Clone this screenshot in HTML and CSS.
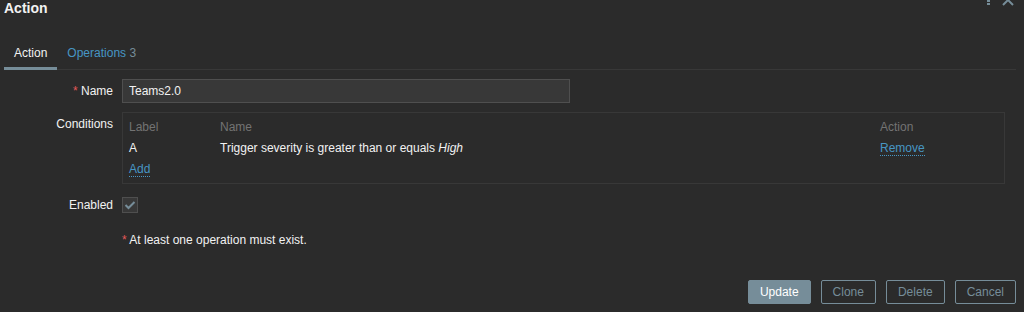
FILE: index.html
```html
<!DOCTYPE html>
<html lang="en">
<head>
  <meta charset="UTF-8">
  <title>Action</title>
  <link rel="stylesheet" href="styles.css">
</head>
<body>

<div class="dialog">
  <div class="dialog-head">
    <h4>Action</h4>
    <div class="head-tools">
      <span class="kebab"><i></i><i></i><i></i></span>
      <svg class="close" width="12" height="12" viewBox="0 0 12 12"><path d="M1 1 L11 11 M11 1 L1 11" stroke="#768d99" stroke-width="2"/></svg>
    </div>
  </div>

  <div class="tabs">
    <a class="tab active">Action</a>
    <a class="tab">Operations <span class="count">3</span></a>
  </div>

  <div class="form">
    <div class="row">
      <label class="lbl"><span class="req">*</span> Name</label>
      <input class="text-input" type="text" value="Teams2.0">
    </div>

    <div class="row">
      <label class="lbl">Conditions</label>
      <div class="cond-box">
        <table class="cond-table">
          <tr class="head"><td class="c-label">Label</td><td>Name</td><td class="c-action">Action</td></tr>
          <tr><td>A</td><td>Trigger severity is greater than or equals <em>High</em></td><td><a class="link">Remove</a></td></tr>
          <tr><td colspan="3"><a class="link">Add</a></td></tr>
        </table>
      </div>
    </div>

    <div class="row">
      <label class="lbl">Enabled</label>
      <span class="check">
        <svg width="12" height="10" viewBox="0 0 12 10"><path d="M1.5 5 L4.5 8 L10.5 2" fill="none" stroke="#768d99" stroke-width="2"/></svg>
      </span>
    </div>

    <div class="row note-row">
      <span class="lbl"></span>
      <p class="note"><span class="req">*</span> At least one operation must exist.</p>
    </div>
  </div>

  <div class="footer">
    <button class="btn primary">Update</button>
    <button class="btn">Clone</button>
    <button class="btn">Delete</button>
    <button class="btn">Cancel</button>
  </div>
</div>

</body>
</html>
```

FILE: styles.css
```css
* { margin: 0; padding: 0; box-sizing: border-box; }

body {
  font-family: 'Liberation Sans', Arial, sans-serif;
  font-size: 12px;
  background: #2b2b2b;
  color: #f2f2f2;
  width: 1024px;
  height: 312px;
  overflow: hidden;
}

/* Header */
.dialog-head {
  display: flex;
  justify-content: space-between;
  align-items: flex-start;
  height: 36px;
  padding: 0 4px;
  margin-top: -3px;
}

.dialog-head h4 {
  font-size: 14px;
  font-weight: bold;
  line-height: 22px;
  color: #f2f2f2;
}

.head-tools {
  display: flex;
  gap: 12px;
  align-items: flex-start;
  padding-right: 6px;
}

.kebab {
  display: flex;
  flex-direction: column;
  gap: 1px;
}

.kebab i {
  display: block;
  width: 3px;
  height: 2px;
  background: #768d99;
}

.close { margin-top: -3px; }

/* Tabs */
.tabs {
  display: flex;
  margin: 12px 8px 0 4px;
  border-bottom: 1px solid #383838;
}

.tab {
  padding: 0 10px 6px;
  line-height: 16px;
  color: #4796c4;
  border-bottom: 3px solid transparent;
  margin-bottom: -1px;
}

.tab.active {
  color: #f2f2f2;
  border-bottom-color: #768d99;
}

.tab .count { color: #768d99; }

/* Form */
.form {
  padding-top: 9px;
}

.row {
  display: flex;
  align-items: flex-start;
  margin-bottom: 9px;
}

.lbl {
  width: 122px;
  text-align: right;
  padding: 4px 9px 0 0;
  line-height: 16px;
  flex-shrink: 0;
}

.req { color: #e45959; }

.text-input {
  width: 448px;
  height: 24px;
  background: #383838;
  border: 1px solid #4f4f4f;
  color: #f2f2f2;
  font-family: inherit;
  font-size: 12px;
  padding: 0 6px;
  outline: none;
}

.cond-box {
  width: 883px;
  height: 72px;
  border: 1px solid #383838;
  padding: 4px 0 0 6px;
}

.cond-table {
  width: 100%;
  border-collapse: collapse;
}

.cond-table td {
  padding: 3px 0;
  line-height: 15px;
  vertical-align: top;
}

.cond-table tr.head td { color: #737373; }

.cond-table .c-label { width: 91px; }

.cond-table .c-action { width: 124px; }

.link {
  color: #4796c4;
  border-bottom: 1px dotted #4796c4;
}

.check {
  display: flex;
  align-items: center;
  justify-content: center;
  width: 16px;
  height: 16px;
  margin-top: 4px;
  background: #383838;
  border: 1px solid #4f4f4f;
}

.note-row { margin-top: 19px; }

.note { line-height: 16px; }

/* Footer */
.footer {
  display: flex;
  justify-content: flex-end;
  gap: 10px;
  padding: 23px 8px 0 0;
}

.btn {
  height: 24px;
  padding: 0 11px;
  font-family: inherit;
  font-size: 12px;
  background: transparent;
  color: #768d99;
  border: 1px solid #768d99;
  border-radius: 2px;
}

.btn.primary {
  background: #768d99;
  color: #fff;
}
```
